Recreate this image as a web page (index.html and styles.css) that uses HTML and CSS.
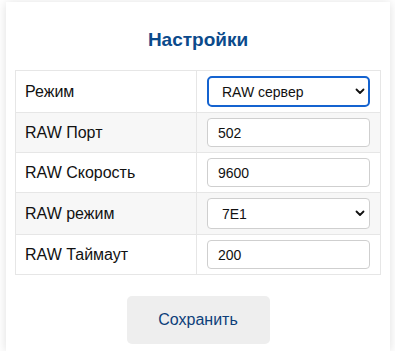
FILE: index.html
```html
<!DOCTYPE html>
<html lang="ru">
<head>
<meta charset="utf-8">
<link rel="stylesheet" href="styles.css">
</head>
<body>
<div class="card">
  <h2 class="title">Настройки</h2>
  <table class="settings">
    <tr class="row-sel">
      <td class="label">Режим</td>
      <td class="field">
        <div class="sel-wrap">
          <select class="sel focused"><option>RAW сервер</option></select>
          <svg class="chev" width="10" height="7" viewBox="0 0 10 7"><path d="M1.5 1.5 L5 5 L8.5 1.5" fill="none" stroke="#111" stroke-width="1.8" stroke-linecap="round" stroke-linejoin="round"/></svg>
        </div>
      </td>
    </tr>
    <tr class="alt">
      <td class="label">RAW Порт</td>
      <td class="field"><input class="inp" type="text" value="502"></td>
    </tr>
    <tr>
      <td class="label">RAW Скорость</td>
      <td class="field"><input class="inp" type="text" value="9600"></td>
    </tr>
    <tr class="alt row-sel">
      <td class="label">RAW режим</td>
      <td class="field">
        <div class="sel-wrap">
          <select class="sel"><option>7E1</option></select>
          <svg class="chev" width="10" height="7" viewBox="0 0 10 7"><path d="M1.5 1.5 L5 5 L8.5 1.5" fill="none" stroke="#111" stroke-width="1.8" stroke-linecap="round" stroke-linejoin="round"/></svg>
        </div>
      </td>
    </tr>
    <tr>
      <td class="label">RAW Таймаут</td>
      <td class="field"><input class="inp" type="text" value="200"></td>
    </tr>
  </table>
  <div class="actions">
    <button class="save">Сохранить</button>
  </div>
</div>
</body>
</html>
```

FILE: styles.css
```css
html, body {
  margin: 0;
  padding: 0;
  background: #ffffff;
  font-family: "Liberation Sans", Arial, sans-serif;
}
.card {
  margin: 2px 5px 0 6px;
  width: 384px;
  box-sizing: border-box;
  padding: 9px 9px 7px 9px;
  background: #ffffff;
  box-shadow: 0 1px 10px rgba(0, 0, 0, 0.13);
}
.title {
  margin: 18px 0 19px 0;
  font-size: 19px;
  line-height: 22px;
  font-weight: bold;
  color: #0b4a8b;
  text-align: center;
}
.settings {
  width: 366px;
  border-collapse: collapse;
  table-layout: fixed;
  border: 1px solid #e6e6e6;
}
.settings td {
  border: 1px solid #e6e6e6;
  padding: 5px 10px;
  vertical-align: middle;
}
.settings .label {
  width: 161px;
  font-size: 16px;
  color: #111111;
  padding-left: 9px;
}
.settings tr.alt td {
  background: #f7f7f7;
}
.inp {
  display: block;
  width: 163px;
  height: 29px;
  box-sizing: border-box;
  border: 1px solid #cfcfcf;
  border-radius: 4px;
  padding: 0 10px;
  font-family: "Liberation Sans", Arial, sans-serif;
  font-size: 14px;
  color: #111111;
  background: #ffffff;
}
.sel-wrap {
  position: relative;
  width: 163px;
  height: 31px;
}
.sel {
  display: block;
  width: 163px;
  height: 31px;
  box-sizing: border-box;
  -webkit-appearance: none;
  appearance: none;
  border: 1px solid #cfcfcf;
  border-radius: 4px;
  padding: 0 14px;
  font-family: "Liberation Sans", Arial, sans-serif;
  font-size: 14px;
  color: #111111;
  background: #ffffff;
}
.sel.focused {
  border: 2px solid #1463d0;
  border-radius: 5px;
  padding: 0 13px;
}
.chev {
  position: absolute;
  right: 5px;
  top: 12px;
}
.actions {
  display: flex;
  justify-content: center;
  margin-top: 21px;
}
.save {
  width: 143px;
  height: 48px;
  border: none;
  border-radius: 5px;
  background: #eeeeee;
  color: #0d3f7a;
  font-family: "Liberation Sans", Arial, sans-serif;
  font-size: 16px;
}
```
